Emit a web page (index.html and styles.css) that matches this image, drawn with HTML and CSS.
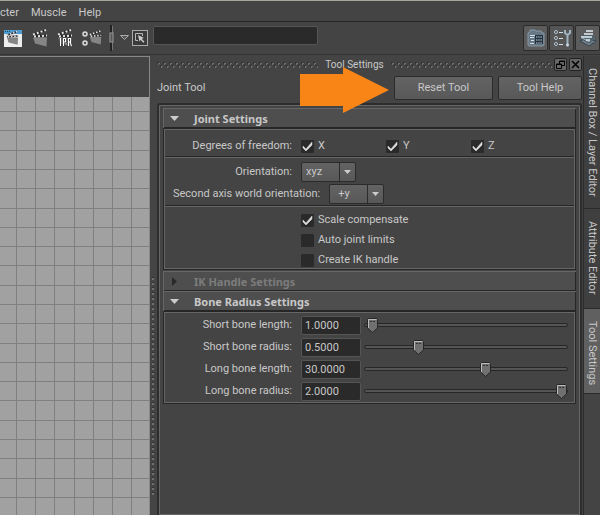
FILE: index.html
```
<!DOCTYPE html>
<html lang="en">
<head>
    <meta charset="UTF-8">
    <meta name="viewport" content="width=device-width, initial-scale=1.0">
    <title>Tool Settings</title>
    <link rel="stylesheet" href="styles.css">
</head>
<body>
    <svg class="defs" width="0" height="0" aria-hidden="true">
        <defs>
            <pattern id="dots" width="6" height="6" patternUnits="userSpaceOnUse">
                <path d="M0 0h2v2h-2zM3 3h2v2h-2z" fill="#333"/>
                <path d="M1 1h2v1h-1v1h-1zM4 4h2v1h-1v1h-1z" fill="#707070"/>
            </pattern>
            <pattern id="grid" width="115" height="135" patternUnits="userSpaceOnUse">
                <path d="M16.500 0v135M35.500 0v135M54.500 0v135M74.500 0v135M93.500 0v135M112.500 0v135M0 14.500h115M0 33.500h115M0 53.500h115M0 72.500h115M0 91.500h115M0 111.500h115M0 130.500h115" stroke="#7f7f7f"/>
            </pattern>
            <symbol id="clapper" viewBox="0 0 16 20">
                <path d="M1 9L15 9.500L14.500 18.500L3 15.500z" fill="#858585"/>
                <path d="M1 6.500L14 2M1 8.500L15 7.500" stroke="#222" stroke-width="2"/>
                <path d="M1 6.500L14 2" stroke="#e4e4e4" stroke-width="2" stroke-dasharray="2 2"/>
                <path d="M2 8.500L15 7.500" stroke="#e4e4e4" stroke-width="2" stroke-dasharray="2 2"/>
            </symbol>
        </defs>
    </svg>

    <div class="app">
        <nav class="menubar">
            <a href="#">cter</a>
            <a href="#">Muscle</a>
            <a href="#">Help</a>
        </nav>

        <div class="toolbar">
            <div class="tools">
                <button class="tool" aria-label="Render view">
                    <svg width="20" height="20" viewBox="0 0 20 20">
                        <rect x="1" y="2" width="18" height="17" fill="#ededed"/>
                        <rect x="1" y="2" width="18" height="4" fill="#4c9bd1"/>
                        <path d="M2 3.500h1M4 3.500h1M6 3.500h1" stroke="#245"/>
                        <use href="#clapper" x="3" y="2" width="13" height="16"/>
                    </svg>
                </button>
                <button class="tool" aria-label="Render frame">
                    <svg width="16" height="20"><use href="#clapper" width="16" height="20"/></svg>
                </button>
                <button class="tool" aria-label="IPR render">
                    <svg width="16" height="20" viewBox="0 0 16 20">
                        <use href="#clapper" width="16" height="20"/>
                        <path d="M3.500 10v8M6.500 18v-7.500h2v3.500h-2M11.500 18v-7.500h2v3.500h-2M13 14l1.500 4" fill="none" stroke="#111" stroke-width="2"/>
                        <path d="M3.500 10v8M6.500 18v-7.500h2v3.500h-2M11.500 18v-7.500h2v3.500h-2M13 14l1.500 4" fill="none" stroke="#fff" stroke-width="1.200"/>
                    </svg>
                </button>
                <button class="tool" aria-label="Render settings">
                    <svg width="20" height="20" viewBox="0 0 20 20">
                        <use href="#clapper" x="7" width="13" height="19"/>
                        <circle cx="3" cy="6" r="2" fill="#555" stroke="#ddd" stroke-width="1.500"/>
                        <circle cx="3" cy="15" r="2" fill="#555" stroke="#ddd" stroke-width="1.500"/>
                    </svg>
                </button>
                <svg class="handle" width="5" height="26" viewBox="0 0 5 26">
                    <path d="M2 0v26" stroke="#222" stroke-width="2"/>
                    <path d="M3.500 1v24" stroke="#777"/>
                    <rect x="1" y="8" width="3" height="9" fill="#555" stroke="#999"/>
                </svg>
                <svg class="caret" width="9" height="6" viewBox="0 0 9 6"><path d="M.5.5h8l-4 4z" fill="#555" stroke="#aaa"/></svg>
                <button class="tool" aria-label="Quick select">
                    <svg width="16" height="16" viewBox="0 0 16 16">
                        <rect x=".5" y=".5" width="15" height="15" fill="#3a3a3a" stroke="#aaa"/>
                        <path d="M6 10.500H3.500v-7h7V6" fill="none" stroke="#b8b8b8"/>
                        <path d="M6 5l6 3-2.300.8 2.800 3-1.200 1-2.700-3-1.100 2z" fill="#ccc"/>
                    </svg>
                </button>
                <input class="name-field" type="text" aria-label="Object name">
            </div>
            <div class="views">
                <button class="view" aria-label="Attribute editor">
                    <svg width="18" height="18" viewBox="0 0 18 18">
                        <path d="M1 4l2-1V1h5l1 1h5l1 2h2v12l-1 1H2l-1-1z" fill="#687784" stroke="#8798a5"/>
                        <path d="M3 6.500h5M3 8.500h4M4 11.500h3M3 14.500h4" stroke="#d3e0e8"/>
                        <rect x="8" y="6" width="8" height="9" fill="#24313b"/>
                        <path d="M9 8h6M9 11h6M9 14h6" stroke="#718390" stroke-width="2" stroke-dasharray="1.500 .7"/>
                    </svg>
                </button>
                <button class="view pressed" aria-label="Tool settings">
                    <svg width="18" height="18" viewBox="0 0 18 18">
                        <g fill="#444" stroke="#b9cbd7"><circle cx="3" cy="3" r="1.500"/><circle cx="3" cy="9" r="1.500"/><circle cx="3" cy="15" r="1.500"/></g>
                        <path d="M6 3.500h4M6 9.500h4M6 15.500h4" stroke="#d3e0e8"/>
                        <path d="M12 1v3l2.500 2L17 4V1M14.500 5v11" fill="none" stroke="#9eb3c0" stroke-width="2"/>
                        <circle cx="14.500" cy="16" r="1.500" fill="#cbd9e2"/>
                    </svg>
                </button>
                <button class="view" aria-label="Channel box and layers">
                    <svg width="18" height="18" viewBox="0 0 18 18">
                        <path d="M1 12l7-3 9 3-7 5z" fill="#73838e" stroke="#34434e"/>
                        <path d="M1 9l7-3 9 3-7 5z" fill="#9baab5" stroke="#3f505c"/>
                        <path d="M3 6.500h12v4l-4 2-8-4z" fill="#526470"/>
                        <path d="M7 2h7M5 5h9M2 8h11M7 11h4" stroke="#e3edf3" stroke-width="1.500"/>
                    </svg>
                </button>
            </div>
        </div>

        <div class="workspace">
            <div class="viewport">
                <svg class="grid" width="100%" height="100%"><rect width="100%" height="100%" fill="url(#grid)"/></svg>
            </div>
            <div class="splitter"></div>

            <main class="panel">
                <header class="titlebar">
                    <svg class="drag" height="6"><rect width="100%" height="6" fill="url(#dots)"/></svg>
                    <span class="title">Tool Settings</span>
                    <svg class="drag" height="6"><rect width="100%" height="6" fill="url(#dots)"/></svg>
                    <button class="window-button" aria-label="Undock">
                        <svg width="9" height="9" viewBox="0 0 9 9"><path d="M3.500 4V1h5v4.500H6M3 1.500h6M.5 4h5v4.500h-5zM0 4.500h6" fill="none" stroke="#000"/></svg>
                    </button>
                    <button class="window-button" aria-label="Close">
                        <svg width="9" height="9" viewBox="0 0 9 9"><path d="M1 1l7 7M8 1L1 8" stroke="#000" stroke-width="1.500"/></svg>
                    </button>
                </header>

                <div class="actions">
                    <span class="tool-name">Joint Tool</span>
                    <button class="button reset">Reset Tool</button>
                    <button class="button help">Tool Help</button>
                    <svg class="arrow" width="90" height="47" viewBox="0 0 90 47"><path d="M0 7h43V0l46 23-46 23v-7H0z" fill="#f98517"/></svg>
                </div>

                <div class="settings">
                    <section>
                        <h2 class="section-title"><span class="twisty"></span>Joint Settings</h2>
                        <div class="section-body">
                            <div class="group freedom">
                                <div class="row">
                                    <span class="label">Degrees of freedom:</span>
                                    <div class="axes">
                                        <label class="check"><input type="checkbox" checked>X</label>
                                        <label class="check"><input type="checkbox" checked>Y</label>
                                        <label class="check"><input type="checkbox" checked>Z</label>
                                    </div>
                                </div>
                            </div>
                            <div class="group orientation">
                                <div class="row select-row">
                                    <label class="label" for="orientation">Orientation:</label>
                                    <select class="select" id="orientation"><option>xyz</option></select>
                                </div>
                                <div class="row select-row">
                                    <label class="label" for="second-axis">Second axis world orientation:</label>
                                    <select class="select wide" id="second-axis"><option>+y</option></select>
                                </div>
                            </div>
                            <div class="group options">
                                <label class="check"><input type="checkbox" checked>Scale compensate</label>
                                <label class="check"><input type="checkbox">Auto joint limits</label>
                                <label class="check"><input type="checkbox">Create IK handle</label>
                            </div>
                        </div>
                    </section>
                    <section>
                        <h2 class="section-title disabled"><span class="twisty closed"></span>IK Handle Settings</h2>
                    </section>
                    <section>
                        <h2 class="section-title"><span class="twisty"></span>Bone Radius Settings</h2>
                        <div class="section-body sliders">
                            <div class="row slider-row">
                                <label class="label" for="short-length">Short bone length:</label>
                                <input class="number" id="short-length" type="text" value="1.0000">
                                <input class="slider" type="range" aria-label="Short bone length" value="1">
                            </div>
                            <div class="row slider-row">
                                <label class="label" for="short-radius">Short bone radius:</label>
                                <input class="number" id="short-radius" type="text" value="0.5000">
                                <input class="slider" type="range" aria-label="Short bone radius" value="25">
                            </div>
                            <div class="row slider-row">
                                <label class="label" for="long-length">Long bone length:</label>
                                <input class="number" id="long-length" type="text" value="30.0000">
                                <input class="slider" type="range" aria-label="Long bone length" value="60">
                            </div>
                            <div class="row slider-row">
                                <label class="label" for="long-radius">Long bone radius:</label>
                                <input class="number" id="long-radius" type="text" value="2.0000">
                                <input class="slider" type="range" aria-label="Long bone radius" value="100">
                            </div>
                        </div>
                    </section>
                </div>
            </main>

            <div class="tabs" role="tablist">
                <button class="tab channel" role="tab">Channel Box / Layer Editor</button>
                <button class="tab attribute" role="tab">Attribute Editor</button>
                <button class="tab active" role="tab" aria-selected="true">Tool Settings</button>
            </div>
        </div>
    </div>
</body>
</html>
```
FILE: styles.css
```
* { margin: 0; padding: 0; box-sizing: border-box; }

body {
    font-family: Roboto, "Liberation Sans", sans-serif;
    font-size: 11px;
    line-height: 14px;
    background: #444;
    color: #c8c8c8;
    overflow: hidden;
}

button, input, select {
    font: inherit;
    color: inherit;
}

button {
    background: none;
    border: none;
}

svg { display: block; }
.defs { position: absolute; }

.app {
    display: flex;
    flex-direction: column;
    height: 100vh;
    border-top: 1px solid #a5a69e;
}

/* top bars */

.menubar {
    display: flex;
    align-items: center;
    gap: 12px;
    height: 21px;
    padding-top: 3px;
    border-bottom: 1px solid #262626;
}

.menubar a {
    color: inherit;
    text-decoration: none;
}

.toolbar {
    display: flex;
    justify-content: space-between;
    height: 33px;
    border-bottom: 1px solid #333;
}

.tools {
    display: flex;
    align-items: center;
    gap: 9px;
    padding-left: 3px;
}

.handle { margin-left: -2px; }
.caret { margin: 0 -6px 0 -3px; }

.name-field {
    width: 165px;
    height: 19px;
    margin: 0 0 5px -4px;
    padding: 0 4px;
    background: #2a2a2a;
    border: 1px solid #555;
    border-radius: 2px;
}

.views {
    display: flex;
    align-items: center;
    gap: 1px;
}

.view {
    display: flex;
    align-items: center;
    justify-content: center;
    width: 25px;
    height: 26px;
    background: #5c5c5c;
    border: 1px solid #2b2b2b;
    border-radius: 2px;
}

.view.pressed { background: #555; }

/* workspace */

.workspace {
    display: flex;
    flex: 1;
    min-height: 0;
}

.viewport {
    width: 25%;
    margin-top: 1px;
    padding-top: 40px;
    border: solid #888;
    border-width: 1px 1px 0 0;
}

.grid { background: #a1a1a1; }

.splitter {
    width: 4px;
    margin: 222px 0 18px 1px;
    background: repeating-linear-gradient(#333 0 1px, #707070 1px 3px, #444 3px 5px) 1px 0 / 2px 100% no-repeat;
}

.panel {
    display: flex;
    flex: 1;
    flex-direction: column;
    min-width: 0;
    padding: 3px 1px 0 2px;
}

.titlebar {
    display: flex;
    align-items: center;
    height: 13px;
    font-size: 10px;
}

.drag {
    flex: 1;
    min-width: 0;
}

.title {
    margin: 0 7px;
    line-height: 13px;
}

.window-button {
    display: flex;
    align-items: center;
    justify-content: center;
    width: 13px;
    height: 13px;
    margin-left: 2px;
    background: #666;
    border: 1px solid #222;
    border-radius: 2px;
}

.actions {
    position: relative;
    display: flex;
    align-items: center;
    gap: 5px;
    height: 32px;
    padding-top: 2px;
}

.tool-name { margin-right: auto; }

.button {
    height: 24px;
    background: linear-gradient(#636363, #585858);
    border: 1px solid #2b2b2b;
    border-radius: 2px;
}

.reset { width: 99px; }
.help { width: 84px; }

/* callout drawn over the row, pointing at the reset button */
.arrow {
    position: absolute;
    right: 192px;
    top: -4px;
}

/* settings */

.settings {
    flex: 1;
    padding: 3px 4px;
    border: 2px solid #2d2d2d;
    border-bottom: none;
    border-radius: 3px 3px 0 0;
    box-shadow: inset 0 0 0 1px #666;
}

.section-title {
    display: flex;
    align-items: center;
    height: 20px;
    padding-left: 6px;
    background: #4e4e4e;
    border: solid #666;
    border-width: 1px 0 0 1px;
    box-shadow: inset -1px -1px #262626;
    font-family: "Noto Sans", sans-serif;
    font-size: 11px;
    font-weight: bold;
}

.section-title.disabled { color: #7c7c7c; }

.twisty {
    width: 9px;
    height: 5px;
    margin-right: 15px;
    background: #ccc;
    clip-path: polygon(0 0, 100% 0, 50% 100%);
}

.twisty.closed {
    width: 5px;
    height: 9px;
    margin: 0 17px 0 2px;
    background: #2a2a2a;
    clip-path: polygon(0 0, 100% 50%, 0 100%);
}

.section-body {
    border: 1px solid #262626;
    outline: 1px solid #666;
    outline-offset: -2px;
    margin-bottom: 1px;
}

.group + .group {
    border-top: 1px solid #262626;
    box-shadow: inset 0 1px #666;
}

.row {
    display: flex;
    align-items: center;
    gap: 9px;
}

.label {
    flex: none;
    min-width: 127px;
    padding-left: 8px;
    text-align: right;
}

.freedom { padding: 9px 1px 2px; }

.freedom .row { height: 16px; }

.axes {
    display: grid;
    flex: 1;
    grid-template-columns: repeat(3, 85px);
}

.check {
    display: flex;
    align-items: center;
    gap: 4px;
}

.check input {
    appearance: none;
    width: 13px;
    height: 13px;
    background: #2a2a2a;
    border-radius: 1px;
}

.check input:checked {
    background: #2a2a2a url('data:image/svg+xml,<svg xmlns="http://www.w3.org/2000/svg" viewBox="0 0 13 13"><path d="M2 6l3 3 6-7v3l-6 6-3-3z" fill="%23ddd" stroke="%23ddd" stroke-width=".5"/></svg>');
}

.orientation { padding: 4px 1px 0; }

.select-row { height: 22px; }

.select {
    appearance: none;
    width: 55px;
    height: 20px;
    padding-left: 4px;
    border: 1px solid #2b2b2b;
    border-radius: 2px;
    background:
        url('data:image/svg+xml,<svg xmlns="http://www.w3.org/2000/svg" width="7" height="4"><path d="M0 0h7L3.500 4z" fill="%23ccc"/></svg>') right 4px center no-repeat,
        linear-gradient(#2b2b2b, #2b2b2b) right 15px top / 1px 100% no-repeat,
        linear-gradient(#636363, #585858);
}

.select.wide { padding-left: 8px; }

.options {
    display: flex;
    flex-direction: column;
    gap: 6px;
    padding: 7px 1px 2px 137px;
}

.sliders { padding: 2px 7px 1px 1px; }

.slider-row { height: 22px; }

.number {
    width: 60px;
    height: 19px;
    padding: 0 3px;
    background: #2a2a2a;
    border: 1px solid #555;
    border-radius: 2px;
}

.slider {
    appearance: none;
    flex: 1;
    min-width: 0;
    height: 15px;
    margin-left: -6px;
    background: none;
}

.slider::-webkit-slider-runnable-track {
    height: 4px;
    background: #555;
    border: 1px solid #262626;
    border-radius: 2px;
}

.slider::-webkit-slider-thumb {
    appearance: none;
    width: 11px;
    height: 15px;
    margin-top: -6px;
    background: url('data:image/svg+xml,<svg xmlns="http://www.w3.org/2000/svg" width="11" height="15"><path d="M1.500.5h8l1 1v8.500l-5 4.500-5-4.500V1.500z" fill="%23707070" stroke="%23262626"/><path d="M1.500 10V1.500h8" fill="none" stroke="%23bbb"/><path d="M3 3.500h2M6 3.500h2" stroke="%23333"/></svg>') no-repeat;
}

/* side tabs */

.tabs {
    display: flex;
    flex-direction: column;
    width: 17px;
    margin-top: 1px;
    border-left: 1px solid #2b2b2b;
}

.tab {
    width: 16px;
    padding-top: 12px;
    border-bottom: 1px solid #2b2b2b;
    background: #3f3f3f;
    line-height: 16px;
    text-align: left;
    white-space: nowrap;
    writing-mode: vertical-rl;
}

.channel { height: 153px; }
.attribute { height: 100px; }

.tab.active {
    height: 85px;
    background: #606060;
}
```
